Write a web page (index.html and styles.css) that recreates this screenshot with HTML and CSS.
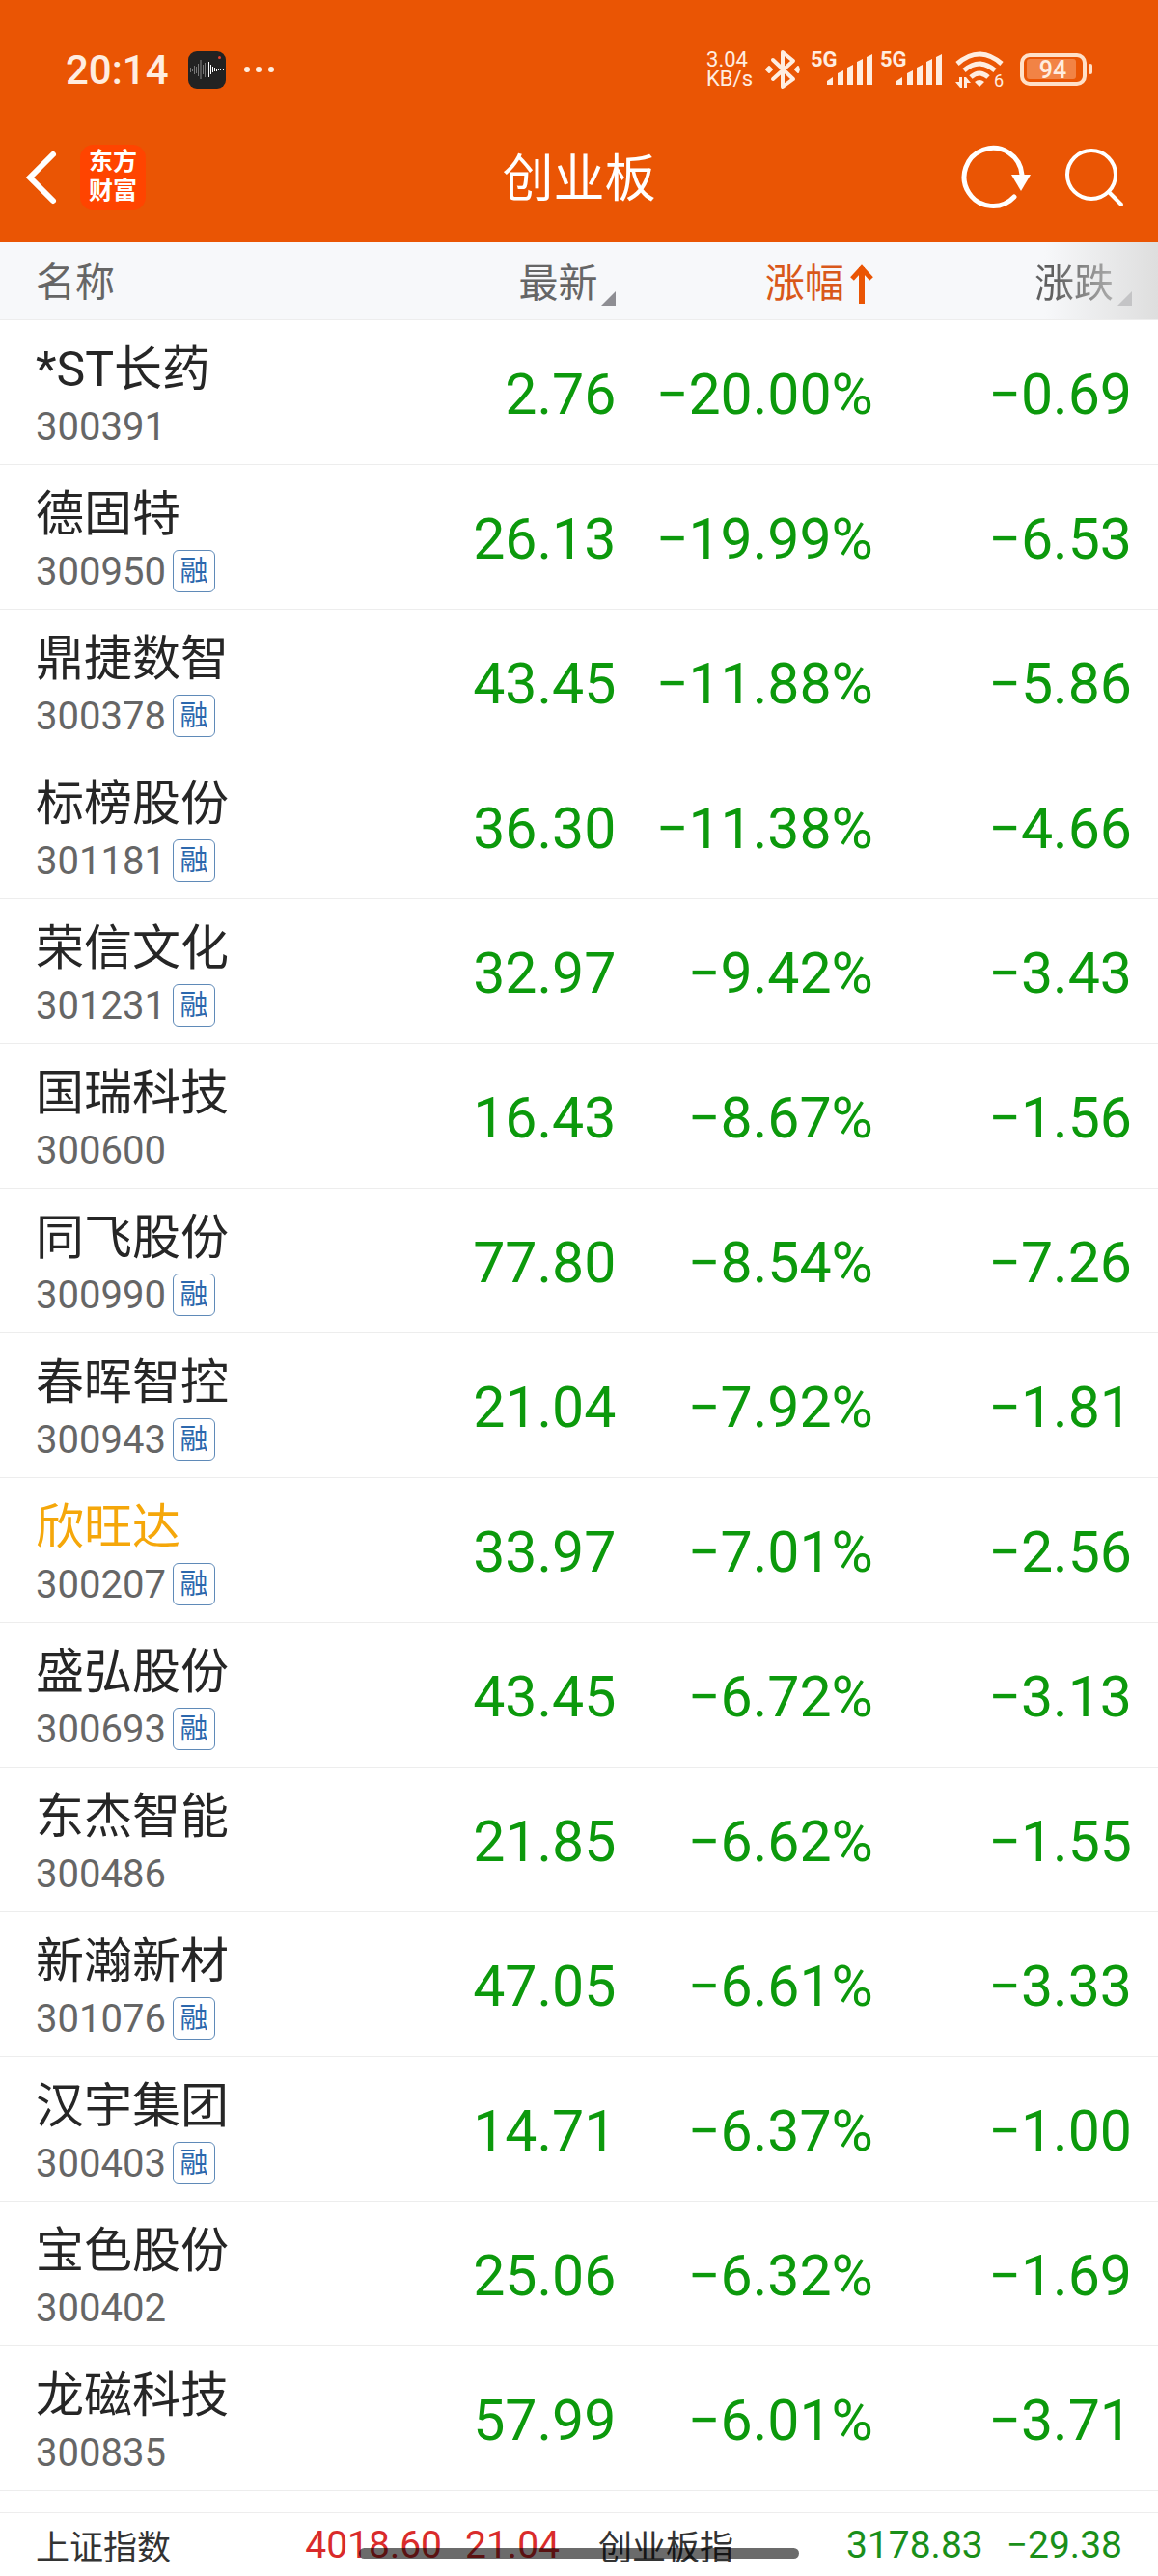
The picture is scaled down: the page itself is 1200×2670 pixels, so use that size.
FILE: index.html
```html
<!DOCTYPE html>
<html lang="zh-CN">
<head>
  <meta charset="utf-8">
  <meta name="viewport" content="width=device-width, initial-scale=1">
  <title>创业板</title>
  <link rel="stylesheet" href="styles.css">
</head>
<body>
  <header class="top">
    <div class="status">
      <span class="time">20:14</span>
      <svg class="recorder" width="39" height="39" viewBox="0 0 39 39">
        <rect width="39" height="39" rx="9" fill="#222"/>
        <g stroke="#777" stroke-width="1">
          <path d="M2.500 17v5M4.500 18v3M6.500 15v9M8.500 16v7M10.500 13v13M15.500 14v10M17.500 12v15"/>
          <path d="M13 9v20" stroke-width="2" stroke="#555"/>
        </g>
        <path d="M21.500 11v16M23.500 14v10M25.500 16v6M27.500 17v4M29.500 18v3M31.500 18v2M33.500 18v2M36.500 18v2" stroke="#fff" stroke-width="1"/>
        <path d="M19.500 4v31" stroke="#e5533d" stroke-width="1"/>
        <circle cx="32.500" cy="6.500" r="1.500" fill="#e5402d"/>
      </svg>
      <svg width="34" height="8" viewBox="0 0 34 8" fill="#ffede0">
        <circle cx="4" cy="4" r="3"/><circle cx="16" cy="4" r="3"/><circle cx="29" cy="4" r="3"/>
      </svg>
      <div class="status-right">
        <span class="speed"><span>3.04</span><span>KB/s</span></span>
        <svg width="44" height="44" viewBox="0 0 44 44" fill="none" stroke="#ffede0" stroke-width="4" stroke-linejoin="round" stroke-linecap="round">
          <path d="M13 12L34 32L23 40V4L34 13L13 32"/>
          <path d="M9 19l3 3l-3 3l-3-3zM39 19l-3 3l3 3l1-3z" fill="#ffede0" stroke-width="2"/>
        </svg>
        <svg class="signal" width="64" height="44" viewBox="0 0 64 44">
          <text x="0" y="19">5G</text>
          <path d="M17 34l6-4v8h-6zM28 26l6-3v15h-6zM38 20l6-3v21h-6zM48 14l6-3v27h-6zM58 9l6-3v32h-6z"/>
        </svg>
        <svg class="signal" width="64" height="44" viewBox="0 0 64 44">
          <text x="0" y="19">5G</text>
          <path d="M17 34l6-4v8h-6zM28 26l6-3v15h-6zM38 20l6-3v21h-6zM48 14l6-3v27h-6zM58 9l6-3v32h-6z"/>
        </svg>
        <svg class="wifi" width="60" height="48" viewBox="0 -2 60 48">
          <g fill="none" stroke="#ffede0" stroke-width="5">
            <path d="M8 16Q31 -4 54 16"/>
            <path d="M15 23Q31 9 47 23"/>
            <path d="M22 30Q31 22 40 30"/>
          </g>
          <path d="M26 35q5-4 10 0l-5 5zM6 35h4v-5h3v11h-2zM15 30h2l5 6h-4v5h-3z"/>
          <text x="46" y="40">6</text>
        </svg>
        <svg class="battery" width="80" height="44" viewBox="0 0 80 44">
          <rect x="7" y="7" width="65" height="30" rx="8" fill="none" stroke="#ffe0c8" stroke-width="4"/>
          <rect x="12" y="11" width="51" height="21" rx="3" fill="#f28345"/>
          <rect x="76" y="16" width="4" height="11" rx="2" fill="#ffe0c8"/>
          <text x="39" y="31">94</text>
        </svg>
      </div>
    </div>
    <nav class="nav">
      <div class="nav-left">
        <button class="icon-btn" aria-label="返回">
          <svg width="36" height="60" viewBox="0 0 36 60" fill="none" stroke="#fff" stroke-width="6" stroke-linecap="round" stroke-linejoin="miter">
            <path d="M31 6L7 30L31 54"/>
          </svg>
        </button>
        <a class="logo" href="#">东方<br>财富</a>
      </div>
      <h1>创业板</h1>
      <div class="nav-right">
        <button class="icon-btn" aria-label="刷新">
          <svg width="76" height="72" viewBox="0 0 76 72">
            <path d="M65 33A30 30 0 1 0 57 56" fill="none" stroke="#fff" stroke-width="5" stroke-linecap="round"/>
            <path d="M54 33h20L64 50z" fill="#fff"/>
          </svg>
        </button>
        <button class="icon-btn" aria-label="搜索">
          <svg width="64" height="72" viewBox="0 0 64 72" fill="none" stroke="#fff" stroke-width="4" stroke-linecap="round">
            <circle cx="29" cy="33" r="25"/>
            <path d="M47 51L60 64"/>
          </svg>
        </button>
      </div>
    </nav>
  </header>

  <main>
    <table class="quotes">
      <colgroup>
        <col class="col-name">
        <col class="col-price">
        <col class="col-pct">
        <col class="col-change">
      </colgroup>
      <thead>
        <tr>
          <th>名称</th>
          <th><button class="sort">最新<span class="corner"></span></button></th>
          <th><button class="sort active">涨幅<svg class="arrow" width="24" height="42" viewBox="0 0 24 42" fill="none" stroke="#ea5504"><path d="M12 4V42" stroke-width="6"/><path d="M2 16L12 5L22 16" stroke-width="5"/></svg></button></th>
          <th><button class="sort">涨跌<span class="corner"></span></button></th>
        </tr>
      </thead>
      <tbody>
        <tr>
          <td><div class="name">*ST长药</div><div class="code">300391</div></td>
          <td>2.76</td><td>−20.00%</td><td>−0.69</td>
        </tr>
        <tr>
          <td><div class="name">德固特</div><div class="code">300950<span class="tag">融</span></div></td>
          <td>26.13</td><td>−19.99%</td><td>−6.53</td>
        </tr>
        <tr>
          <td><div class="name">鼎捷数智</div><div class="code">300378<span class="tag">融</span></div></td>
          <td>43.45</td><td>−11.88%</td><td>−5.86</td>
        </tr>
        <tr>
          <td><div class="name">标榜股份</div><div class="code">301181<span class="tag">融</span></div></td>
          <td>36.30</td><td>−11.38%</td><td>−4.66</td>
        </tr>
        <tr>
          <td><div class="name">荣信文化</div><div class="code">301231<span class="tag">融</span></div></td>
          <td>32.97</td><td>−9.42%</td><td>−3.43</td>
        </tr>
        <tr>
          <td><div class="name">国瑞科技</div><div class="code">300600</div></td>
          <td>16.43</td><td>−8.67%</td><td>−1.56</td>
        </tr>
        <tr>
          <td><div class="name">同飞股份</div><div class="code">300990<span class="tag">融</span></div></td>
          <td>77.80</td><td>−8.54%</td><td>−7.26</td>
        </tr>
        <tr>
          <td><div class="name">春晖智控</div><div class="code">300943<span class="tag">融</span></div></td>
          <td>21.04</td><td>−7.92%</td><td>−1.81</td>
        </tr>
        <tr>
          <td><div class="name picked">欣旺达</div><div class="code">300207<span class="tag">融</span></div></td>
          <td>33.97</td><td>−7.01%</td><td>−2.56</td>
        </tr>
        <tr>
          <td><div class="name">盛弘股份</div><div class="code">300693<span class="tag">融</span></div></td>
          <td>43.45</td><td>−6.72%</td><td>−3.13</td>
        </tr>
        <tr>
          <td><div class="name">东杰智能</div><div class="code">300486</div></td>
          <td>21.85</td><td>−6.62%</td><td>−1.55</td>
        </tr>
        <tr>
          <td><div class="name">新瀚新材</div><div class="code">301076<span class="tag">融</span></div></td>
          <td>47.05</td><td>−6.61%</td><td>−3.33</td>
        </tr>
        <tr>
          <td><div class="name">汉宇集团</div><div class="code">300403<span class="tag">融</span></div></td>
          <td>14.71</td><td>−6.37%</td><td>−1.00</td>
        </tr>
        <tr>
          <td><div class="name">宝色股份</div><div class="code">300402</div></td>
          <td>25.06</td><td>−6.32%</td><td>−1.69</td>
        </tr>
        <tr>
          <td><div class="name">龙磁科技</div><div class="code">300835</div></td>
          <td>57.99</td><td>−6.01%</td><td>−3.71</td>
        </tr>
      </tbody>
    </table>
  </main>

  <footer class="indexes">
    <div class="index">
      <span class="index-name">上证指数</span>
      <span class="index-values up"><span>4018.60</span><span>21.04</span></span>
    </div>
    <div class="index">
      <span class="index-name">创业板指</span>
      <span class="index-values down"><span>3178.83</span><span>−29.38</span></span>
    </div>
    <div class="home-bar"></div>
  </footer>
</body>
</html>
```
FILE: styles.css
```css
* {
  box-sizing: border-box;
}
body {
  margin: 0;
  min-height: 100vh;
  display: flex;
  flex-direction: column;
  background-color: #fff;
  color: #222;
  font-family: Roboto, "Noto Sans CJK SC", sans-serif;
}
button {
  border: none;
  padding: 0;
  background: none;
  font: inherit;
  color: inherit;
  cursor: pointer;
}
svg {
  display: block;
  flex-shrink: 0;
}

/* status bar and title */
.top {
  background-color: #ea5504;
  color: #fff;
}
.status {
  display: flex;
  align-items: center;
  height: 116px;
  padding: 28px 68px 0 68px;
  color: #ffede0;
}
.time {
  font-size: 42px;
  font-weight: 500;
}
.recorder {
  margin: 0 18px 0 20px;
}
.status-right {
  display: flex;
  align-items: center;
  gap: 8px;
  margin-left: auto;
}
.speed {
  display: flex;
  flex-direction: column;
  font-size: 22px;
  line-height: 20px;
}
.signal,
.wifi {
  fill: #ffede0;
}
.signal text {
  font-size: 22px;
  font-weight: 700;
}
.wifi text {
  font-size: 18px;
}
.battery text {
  fill: #ffede0;
  font-size: 25px;
  font-weight: 500;
  text-anchor: middle;
}
.nav {
  display: grid;
  grid-template-columns: 1fr auto 1fr;
  align-items: center;
  height: 135px;
  padding: 0 24px;
}
.nav-left,
.nav-right {
  display: flex;
  align-items: center;
}
.nav-left {
  gap: 23px;
}
.nav-right {
  justify-content: flex-end;
  gap: 32px;
  padding-right: 10px;
}
.nav h1 {
  margin: 0;
  padding-top: 4px;
  font-size: 53px;
  font-weight: 400;
  line-height: 60px;
}
.logo {
  width: 68px;
  height: 68px;
  padding: 3px 0;
  border-radius: 14px;
  background-color: #ff4400;
  color: #fff;
  font-size: 25px;
  font-weight: 700;
  line-height: 30px;
  text-align: center;
  text-decoration: none;
}

/* quote list */
.quotes {
  width: 100%;
  table-layout: fixed;
  border-collapse: separate;
  border-spacing: 0;
}
.col-name {
  width: 31%;
}
.col-price,
.col-pct {
  width: 22.2%;
}
.quotes th,
.quotes td {
  padding: 3px 0 0;
  border-bottom: 1px solid #ededed;
  text-align: right;
}
.quotes th {
  height: 81px;
  background-color: #f7f8fa;
  color: #666;
  font-size: 41px;
  font-weight: 400;
  line-height: 60px;
}
.quotes th:first-child,
.quotes td:first-child {
  padding-left: 37px;
  text-align: left;
}
.quotes th:last-child,
.quotes td:last-child {
  padding-right: 27px;
}
.quotes th:last-child {
  background: linear-gradient(to right, #f7f8fa 60%, #dedede);
}
.quotes th:last-child .sort {
  background: linear-gradient(to right, #606060 20%, #b8b8b8 90%);
  -webkit-background-clip: text;
  background-clip: text;
  color: transparent;
}
.quotes th:last-child .corner {
  border-bottom-color: #c4c4c6;
}
.sort {
  display: inline-flex;
  align-items: center;
  vertical-align: middle;
}
.sort.active {
  color: #d9581a;
}
.arrow {
  margin-left: 6px;
}
.corner {
  align-self: flex-end;
  margin: 0 0 7px 4px;
  border-left: 15px solid transparent;
  border-bottom: 15px solid #8e8e93;
}
.quotes td {
  height: 150px;
  color: #0c990c;
  font-size: 59px;
}
.name {
  padding-top: 8px;
  color: #262626;
  font-size: 50px;
  line-height: 60px;
}
.name.picked {
  color: #f5a70a;
}
.code {
  display: flex;
  align-items: center;
  gap: 7px;
  height: 58px;
  color: #666;
  font-size: 40px;
}
.tag {
  width: 44px;
  height: 44px;
  border: 1px solid #5f8ab8;
  border-radius: 6px;
  color: #2c68ad;
  font-size: 29px;
  line-height: 43px;
  text-align: center;
}

/* index bar */
.indexes {
  position: relative;
  display: grid;
  grid-template-columns: 1fr 1fr;
  gap: 40px;
  height: 66px;
  margin-top: auto;
  padding: 0 37px;
  border-top: 1px solid #ededed;
}
.index {
  display: flex;
  align-items: center;
  justify-content: space-between;
}
.index-name {
  color: #333;
  font-size: 35px;
}
.index-values {
  display: flex;
  gap: 24px;
  font-size: 39px;
}
.up {
  color: #d92b2b;
}
.down {
  color: #1a8f1a;
}
.home-bar {
  position: absolute;
  left: 31%;
  right: 31%;
  bottom: 18px;
  height: 11px;
  border-radius: 6px;
  background-color: rgba(0, 0, 0, 0.58);
}
```
